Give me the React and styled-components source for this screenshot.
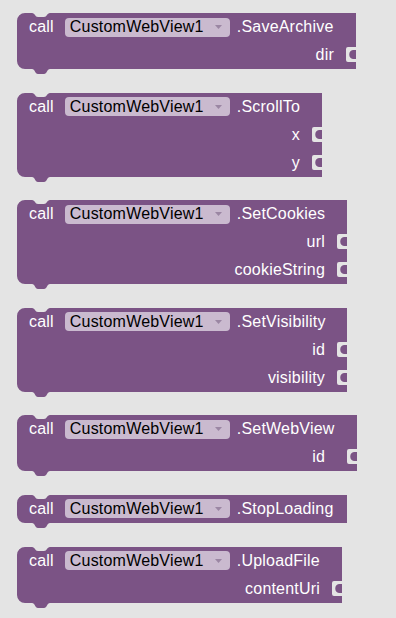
import React from 'react';
import styled, { createGlobalStyle } from 'styled-components';

const ROW = 28;
const PURPLE = '#7b5385';
const CANVAS = '#e4e4e4';

const blocks = [
  { method: 'SaveArchive', width: 339, inputs: ['dir'] },
  { method: 'ScrollTo', width: 305, inputs: ['x', 'y'] },
  { method: 'SetCookies', width: 330, inputs: ['url', 'cookieString'] },
  { method: 'SetVisibility', width: 330, inputs: ['id', 'visibility'] },
  { method: 'SetWebView', width: 340, inputs: ['id'], inset: 32 },
  { method: 'StopLoading', width: 330, inputs: [] },
  { method: 'UploadFile', width: 325, inputs: ['contentUri'] },
];

function blockPath(w, h) {
  return [
    'M 0,8 A 8 8 0 0 1 8,0 H 15',
    'C 18,0 18,4 21,4 H 27 C 30,4 30,0 33,0',
    `H ${w} V ${h} H 33`,
    `C 30,${h} 30,${h + 5} 27,${h + 5} H 21 C 18,${h + 5} 18,${h} 15,${h}`,
    `H 8 A 8 8 0 0 1 0,${h - 8} Z`,
  ].join(' ');
}

// empty value socket: a "C" cut into the right edge
function socketPath(w, t) {
  const x0 = w - 10;
  return [
    `M ${w},${t} H ${x0 + 2} Q ${x0},${t} ${x0},${t + 2} V ${t + 13}`,
    `Q ${x0},${t + 15} ${x0 + 2},${t + 15} H ${w} V ${t + 12} H ${w - 3}`,
    `C ${w - 8},${t + 12} ${w - 8},${t + 3} ${w - 3},${t + 3} H ${w} Z`,
  ].join(' ');
}

export default function App() {
  return (
    <>
      <GlobalStyle />
      <Workspace>
        {blocks.map((b) => {
          const h = ROW * (b.inputs.length + 1);
          return (
            <Block key={b.method} $width={b.width} $height={h}>
              <Shape width={b.width} height={h + 6}>
                <path d={blockPath(b.width, h)} fill={PURPLE} />
                {b.inputs.map((name, i) => (
                  <path key={name} d={socketPath(b.width, ROW * (i + 1) + 6)} fill={CANVAS} />
                ))}
              </Shape>
              <HeaderRow>
                <Call>call</Call>
                <Dropdown>
                  <span>CustomWebView1</span>
                  <Arrow width="7" height="4" viewBox="0 0 7 4">
                    <polygon points="0,0 7,0 3.5,4" />
                  </Arrow>
                </Dropdown>
                <Method>.{b.method}</Method>
              </HeaderRow>
              {b.inputs.map((name) => (
                <InputRow key={name} $inset={b.inset || 22}>
                  {name}
                </InputRow>
              ))}
            </Block>
          );
        })}
      </Workspace>
    </>
  );
}

const GlobalStyle = createGlobalStyle`
  body {
    margin: 0;
    background: ${CANVAS};
    font-family: "Liberation Sans", Arial, sans-serif;
  }
`;

const Workspace = styled.div`
  display: flex;
  flex-direction: column;
  align-items: flex-start;
  gap: 23.6px;
  padding: 13px 0 0 17px;
  height: 618px;
  box-sizing: border-box;
`;

const Block = styled.div`
  position: relative;
  width: ${(p) => p.$width}px;
  height: ${(p) => p.$height}px;
  display: flex;
  flex-direction: column;
  color: #fff;
  font-size: 16px;
  letter-spacing: 0.2px;
`;

const Shape = styled.svg`
  position: absolute;
  left: 0;
  top: 0;
  overflow: visible;
`;

const HeaderRow = styled.div`
  position: relative;
  display: flex;
  align-items: center;
  height: ${ROW}px;
  padding-left: 12px;
  white-space: nowrap;
`;

const Call = styled.span`
  margin-right: 11px;
`;

const Dropdown = styled.div`
  display: flex;
  align-items: center;
  box-sizing: border-box;
  width: 165px;
  height: 19px;
  padding-left: 5px;
  border-radius: 4px;
  background: #cabacf;
  color: #000;
`;

const Arrow = styled.svg`
  margin-left: auto;
  margin-right: 8px;
  fill: #9b86a3;
`;

const Method = styled.span`
  margin-left: 7px;
`;

const InputRow = styled.div`
  position: relative;
  display: flex;
  align-items: center;
  justify-content: flex-end;
  height: ${ROW}px;
  padding-right: ${(p) => p.$inset}px;
  white-space: nowrap;
`;
